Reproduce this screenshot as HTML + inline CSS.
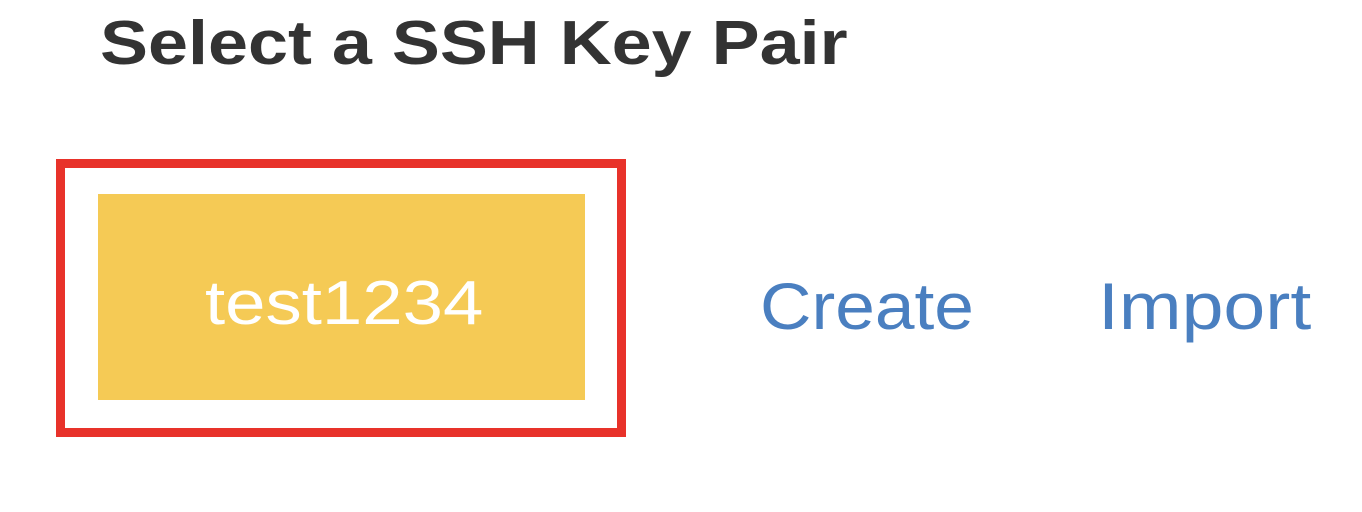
<!DOCTYPE html>
<html><head><style>
body{margin:0;width:1362px;height:512px;background:#fff;position:relative;overflow:hidden;font-family:"Liberation Sans",Arial,sans-serif}
.t{position:absolute;left:100px;top:8px;font-size:62px;font-weight:bold;color:#333;white-space:nowrap;transform:scaleX(1.16);transform-origin:left}
.box{position:absolute;left:56px;top:159px;width:552px;height:260px;border:9px solid #e8322a}
.y{position:absolute;left:98px;top:194px;width:487px;height:206px;background:#f5ca55}
.y span{position:absolute;left:205px;top:0;margin-left:-98px;width:auto;color:#fff;font-size:62px;line-height:220px;transform:scaleX(1.17);transform-origin:left;white-space:nowrap}
.l{position:absolute;top:268px;font-size:66px;color:#4a7fc0;line-height:76px;transform-origin:left;white-space:nowrap}
</style></head><body>
<div class="t">Select a SSH Key Pair</div>
<div class="box"></div>
<div class="y"><span>test1234</span></div>
<div class="l" style="left:760px;transform:scaleX(1.08)">Create</div>
<div class="l" style="left:1098px;transform:scaleX(1.14)">Import</div>
</body></html>
